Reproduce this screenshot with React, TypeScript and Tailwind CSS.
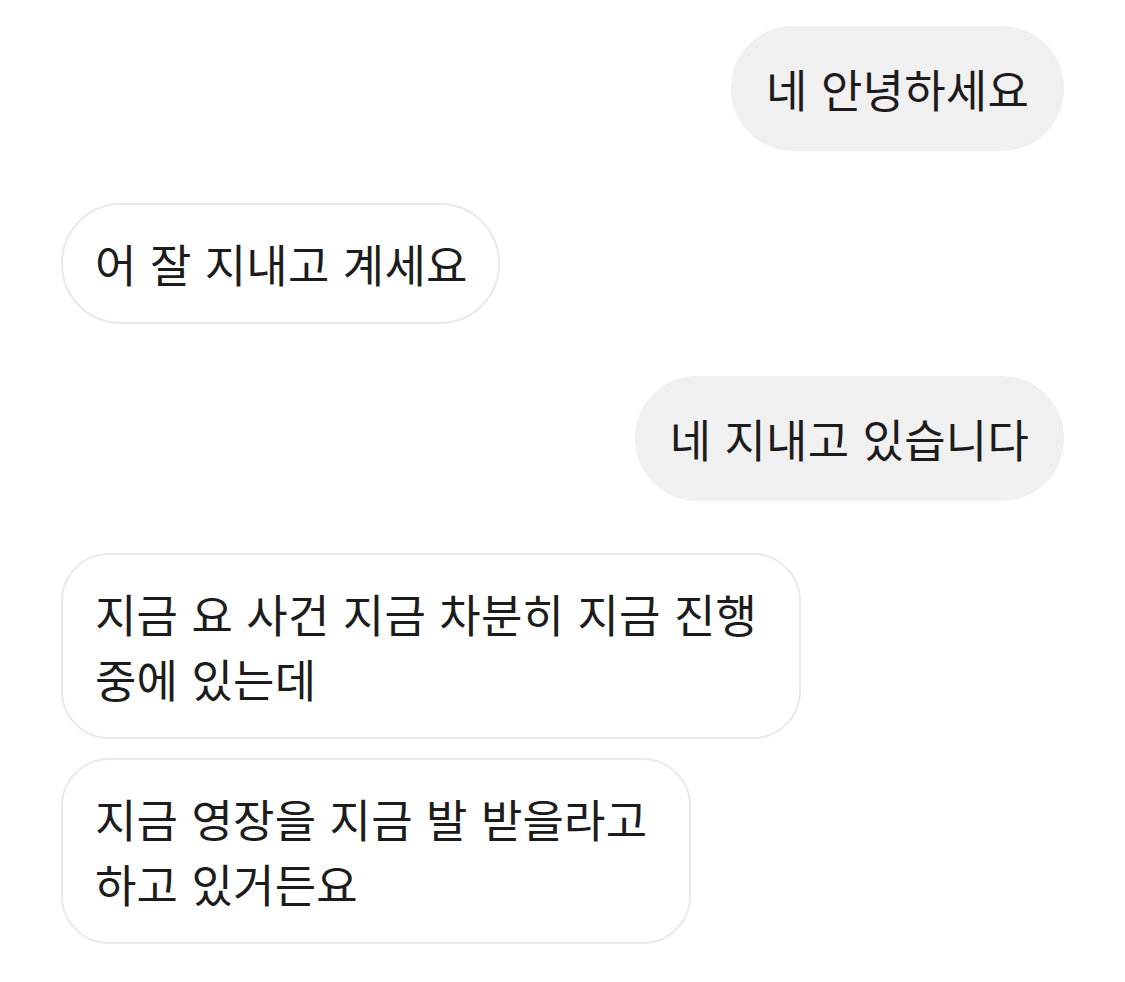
type Msg = {
  id: number
  mine: boolean
  lines: Array<string>
  gap: 'lg' | 'sm'
}

const messages: Array<Msg> = [
  { id: 1, mine: true, lines: ['네 안녕하세요'], gap: 'lg' },
  { id: 2, mine: false, lines: ['어 잘 지내고 계세요'], gap: 'lg' },
  { id: 3, mine: true, lines: ['네 지내고 있습니다'], gap: 'lg' },
  {
    id: 4,
    mine: false,
    lines: ['지금 요 사건 지금 차분히 지금 진행', '중에 있는데'],
    gap: 'lg'
  },
  {
    id: 5,
    mine: false,
    lines: ['지금 영장을 지금 발 받을라고', '하고 있거든요'],
    gap: 'sm'
  }
]

const Bubble = ({ item }: { item: Msg }) => {
  const multi = item.lines.length > 1
  return (
    <div className={item.mine ? 'flex justify-end' : 'flex justify-start'}>
      <div
        className={
          item.mine
            ? 'rounded-[62px] border-2 border-[#f0f0f0] bg-[#f0f0f0] px-[33px] py-[29px]'
            : multi
              ? 'rounded-[48px] border-2 border-[#e9e9e9] bg-white py-[26px] pl-[32px] pr-[42px]'
              : 'rounded-[60px] border-2 border-[#e9e9e9] bg-white py-[27px] pl-[32px] pr-[30px]'
        }
      >
        {item.lines.map((line) => (
          <p
            key={line}
            className={
              multi
                ? 'whitespace-nowrap text-[45px] leading-[65px] tracking-[0.2px] text-[#1c1c1c] [word-spacing:3px]'
                : 'whitespace-nowrap text-[45px] leading-[63px] tracking-[0.2px] text-[#1c1c1c] [word-spacing:3px]'
            }
          >
            {line}
          </p>
        ))}
      </div>
    </div>
  )
}

export default function App() {
  return (
    <div
      className="min-h-[982px] w-[1125px] bg-white px-[61px] pt-[26px]"
      style={{ fontFamily: '"Noto Sans CJK KR", "Noto Sans", sans-serif' }}
    >
      <ul className="flex flex-col">
        {messages.map((item) => (
          <li
            key={item.id}
            className={item.gap === 'sm' ? 'mt-[19px]' : 'mt-[52px] first:mt-0'}
          >
            <Bubble item={item} />
          </li>
        ))}
      </ul>
    </div>
  )
}
